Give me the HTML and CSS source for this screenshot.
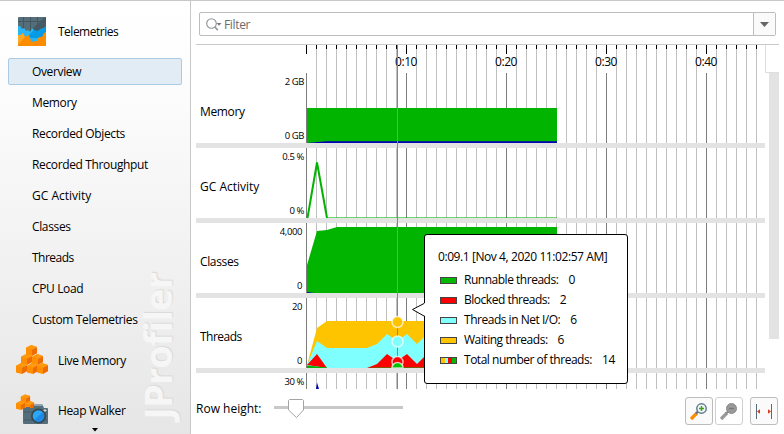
FILE: index.html
```html
<!DOCTYPE html>
<html lang="en">
<head>
<meta charset="utf-8">
<title>Telemetries</title>
<link rel="stylesheet" href="styles.css">
</head>
<body>
<svg width="0" height="0" class="defs">
  <symbol id="cube" viewBox="0 0 12 12">
    <path d="M0 3.2 5.2 0.6 11 2.4 6 5.2V11.4L0 10Z" fill="#ff8f00"/>
    <path d="M6 5 11 2.4V8.8L6 11.4Z" fill="#ef6c00"/>
    <path d="M0 3.2 5.2 0.6 11 2.4 6 5Z" fill="#ff9a0c"/>
  </symbol>
</svg>
<div class="app">
  <nav class="sidebar">
    <div class="section">
      <svg class="icon" width="32" height="32" viewBox="0 0 32 32">
        <rect x="2" y="1" width="28" height="29" rx="1" fill="#546e7a"/>
        <path d="M29 1h1v14H14Z" fill="#455a64"/>
        <path d="M2 5.500h28M7.500 1v12M14.500 1v14M21.500 1v12" stroke="#435761"/>
        <path d="M2 10l2 0 2 3 2-1 2 3 2-1 2 2 2-4 3 3 3 0 3-2 3-1 2-1v18H2Z" fill="#29b6f6"/>
        <path d="M30 10v12H10L18 14l4 1 3-2 3-1Z" fill="#039be5"/>
        <path d="M2 19l3 0 2-2 2 4 2-1 2-1 2 6 2 1 2-1 2 0 2-4 3 0 2-4 2-1v13a1 1 0 0 1-1 1H3a1 1 0 0 1-1-1Z" fill="#fb8c00"/>
        <path d="M2 19l3 0 2-2 2 4L2 28.500Z" fill="#ffa726"/>
      </svg>
      <span class="tight">Telemetries</span>
    </div>
    <div class="item selected"><span>Overview</span></div>
    <div class="item"><span>Memory</span></div>
    <div class="item"><span>Recorded Objects</span></div>
    <div class="item"><span>Recorded Throughput</span></div>
    <div class="item"><span class="wide">GC Activity</span></div>
    <div class="item"><span>Classes</span></div>
    <div class="item"><span class="tight">Threads</span></div>
    <div class="item"><span>CPU Load</span></div>
    <div class="item"><span>Custom Telemetries</span></div>
    <div class="section live">
      <svg class="icon" width="32" height="32" viewBox="0 0 32 32">
        <use href="#cube" x="10" y="0.500" width="12" height="12"/>
        <use href="#cube" x="5" y="9.500" width="12" height="12"/>
        <use href="#cube" x="16" y="9.500" width="12" height="12"/>
        <use href="#cube" x="0" y="18.500" width="12" height="12"/>
        <use href="#cube" x="11" y="18.500" width="12" height="12"/>
        <use href="#cube" x="21" y="18.500" width="12" height="12"/>
      </svg>
      <span>Live Memory</span>
    </div>
    <div class="section heap">
      <svg class="icon" width="32" height="32" viewBox="0 0 32 32">
        <use href="#cube" x="4.500" y="0" width="10.500" height="10.500"/>
        <use href="#cube" x="0" y="6.500" width="10" height="10"/>
        <use href="#cube" x="9" y="6.500" width="10" height="10"/>
        <path d="M8 14h2v-1h4v1h3l2-4h7l2 4h3a1 1 0 0 1 1 1v14a1 1 0 0 1-1 1H8a1 1 0 0 1-1-1V15a1 1 0 0 1 1-1Z" fill="#546e7a"/>
        <path d="M8 18h23M8 26h23" stroke="#455a64"/>
        <path d="M19 10h7v2h-7z" fill="#90a4ae"/>
        <circle cx="22.500" cy="22" r="7.500" fill="#37474f"/>
        <circle cx="22.500" cy="22" r="5.800" fill="#29a9f5"/>
        <path d="M18.400 26.100a5.800 5.800 0 0 0 8.200-8.200Z" fill="#1e88e5"/>
        <path d="M29 15v3M27.500 16.500h3" stroke="#cfd8dc"/>
      </svg>
      <span>Heap Walker</span>
    </div>
    <svg class="more" width="6" height="4" viewBox="0 0 6 4"><path d="M0 0h6L3 3.500Z"/></svg>
    <div class="brand">JProfiler</div>
  </nav>

  <main class="main">
    <div class="filter">
      <svg width="20" height="18" viewBox="0 0 20 18">
        <circle cx="6.500" cy="6.500" r="4.800" fill="none" stroke="#8a9499" stroke-width="1.100"/>
        <path d="M10 10l2.800 3.200" stroke="#8a9499" stroke-width="1.600"/>
        <path d="M11.500 6h5L14 8.700Z" fill="#7a7a7a"/>
      </svg>
      <span class="placeholder">Filter</span>
      <span class="dropdown"><svg width="9" height="5" viewBox="0 0 9 5"><path d="M0 0h9L4.500 5Z" fill="#666"/></svg></span>
    </div>

    <div class="charts">
      <div class="rows">
        <div class="ruler">
          <div class="plot ticks">
            <span></span><span>0:10</span><span>0:20</span><span>0:30</span><span>0:40</span>
          </div>
        </div>
        <div class="row">
          <div class="name">Memory</div>
          <div class="scale gb"><span>2 GB</span><span>0 GB</span></div>
          <svg class="plot" width="459" height="70">
            <path d="M1 35H251V70H1Z" fill="#00b400"/>
            <path d="M1 70L20 68.200H251V70Z" fill="#0000b4"/>
          </svg>
        </div>
        <div class="row">
          <div class="name wide">GC Activity</div>
          <div class="scale pct"><span>0.5 %</span><span>0 %</span></div>
          <svg class="plot" width="459" height="70">
            <path d="M21 69.500H251" stroke="#00b400" stroke-opacity=".55"/>
            <path d="M1.500 70L11 14.500L21 70" fill="none" stroke="#00b400" stroke-width="2"/>
          </svg>
        </div>
        <div class="row">
          <div class="name">Classes</div>
          <div class="scale"><span>4,000</span><span>0</span></div>
          <svg class="plot" width="459" height="70">
            <path d="M1 42L11 8L21 7L31 4H251V70H1Z" fill="#00b400"/>
            <path d="M1 69L8 70H1Z" fill="#0000b4"/>
          </svg>
        </div>
        <div class="row">
          <div class="name tight">Threads</div>
          <div class="scale"><span>20</span><span>0</span></div>
          <svg class="plot" width="459" height="70">
            <path d="M1 67L11 30L21 23H251V70H1Z" fill="#ffc400"/>
            <path d="M1 67L11 43L21 50H61L71 46L81 36L91 43L101 36L111 46L121 36H251V70H1Z" fill="#80ffff"/>
            <path d="M1 67L11 56L21 70ZM61 70L71 66L81 56L91 63L101 56L111 66L121 56H251V70Z" fill="#f00"/>
            <path d="M1 67.500L21 69.500V70H1ZM61 70L71 69.500H251V70Z" fill="#00b400"/>
          </svg>
        </div>
        <div class="row last">
          <div class="name"></div>
          <div class="scale pct"><span>30 %</span></div>
          <svg class="plot" width="459" height="16">
            <path d="M10 16L11 9.500L13 16Z" fill="#0000b4"/>
          </svg>
        </div>
        <svg class="cursor" width="14" height="344">
          <path d="M7.500 0V344" stroke="#4ab04a"/>
          <path d="M7.500 63V98M7.500 182V248" stroke="#66a866"/>
          <g stroke="#fff" stroke-opacity=".7" stroke-width="1.500">
            <circle cx="7.500" cy="277" r="5.500" fill="#ffc400"/>
            <circle cx="7.500" cy="296.500" r="5.500" fill="#80ffff"/>
            <circle cx="7.500" cy="317" r="5.500" fill="#f00"/>
            <path d="M2 323a5.500 5.500 0 0 1 11 0Z" fill="#00c400"/>
          </g>
          <path d="M0 323h14v5H0z" fill="#e3e3e3"/>
        </svg>
      </div>
      <div class="scroll"><div class="corner"></div><div class="thumb"></div></div>
    </div>

    <div class="footer">
      <span class="height-label">Row height:</span>
      <svg class="slider" width="130" height="24" viewBox="0 0 130 24">
        <path d="M0 9.500H129" stroke="#c8c8c8" stroke-width="3"/>
        <path d="M15.500 1.500H28.500L29.500 2.500V12L22.500 19.500L14.500 12V2.500Z" fill="#fff" stroke="#a4a4a4"/>
      </svg>
      <div class="tools">
        <button><svg width="26" height="26" viewBox="0 0 26 26">
          <path d="M5 21l6-6" stroke="#fb8c00" stroke-width="3.200"/><path d="M10 15.500l2.500-2.500" stroke="#546e7a" stroke-width="2"/>
          <circle cx="15.500" cy="10.500" r="4.700" fill="#f0f7fa" stroke="#607d8b" stroke-width="1.500"/>
          <path d="M13 10.500h5M15.500 8v5" stroke="#43a01b" stroke-width="1.500"/></svg></button>
        <button class="off"><svg width="26" height="26" viewBox="0 0 26 26">
          <path d="M5 21l6-6" stroke="#999" stroke-width="3.200"/><path d="M10 15.500l2.500-2.500" stroke="#888" stroke-width="2"/>
          <circle cx="15.500" cy="10.500" r="5" fill="#999" stroke="#8b8b8b"/>
          <path d="M13 10.500h5" stroke="#777" stroke-width="1.300"/></svg></button>
        <button class="fit"><svg width="26" height="26" viewBox="0 0 26 26">
          <path d="M5.500 6v15M20.500 6v15" stroke="#546e7a"/>
          <path d="M6 13.500l3-2.300v4.600ZM20 13.500l-3-2.300v4.600Z" fill="#d83a1e"/></svg></button>
      </div>
    </div>

    <div class="tooltip">
      <svg class="arrow" width="14" height="16"><path d="M14 1L1.500 7.500L14 14Z" fill="#fff"/><path d="M13 1.500L1.500 7.500L13 14" fill="none" stroke="#000"/></svg>
      <div class="time">0:09.1 [Nov 4, 2020 11:02:57 AM]</div>
      <div class="entry"><i class="green"></i><span>Runnable threads:</span><b>0</b></div>
      <div class="entry"><i class="red"></i><span>Blocked threads:</span><b>2</b></div>
      <div class="entry"><i class="cyan"></i><span>Threads in Net I/O:</span><b>6</b></div>
      <div class="entry"><i class="amber"></i><span>Waiting threads:</span><b>6</b></div>
      <div class="entry"><i class="all"></i><span>Total number of threads:</span><b>14</b></div>
    </div>
  </main>
</div>
</body>
</html>
```
FILE: styles.css
```css
* { box-sizing: border-box; }
body {
  margin: 0;
  font: 12px/16px "Open Sans", "Noto Sans", sans-serif;
  color: #000;
  background: #fff;
  overflow: hidden;
}
svg { display: block; flex: none; }
.defs { position: absolute; }
.app { display: flex; width: 784px; height: 434px; border-top: 1px solid #c8c8c8; }

.sidebar {
  position: relative;
  width: 191px;
  flex: none;
  padding-top: 15px;
  border-right: 1px solid #c8c8c8;
  background: linear-gradient(#fff 0, #fcfcfc 22%, #e6e6e6 100%);
  letter-spacing: -0.36px;
}
.section { display: flex; align-items: center; gap: 10px; height: 32px; padding-left: 16px; }
.section span { padding-top: 2px; }
.section .tight { padding-top: 0; }
.item {
  display: flex;
  align-items: center;
  height: 27px;
  margin: 0 8px 4px;
  padding-left: 24px;
  position: relative;
  z-index: 1;
}
.section + .item { margin-top: 10px; }
.item.selected { border: 1px solid #a9cbe3; border-radius: 2px; padding-left: 23px; background: #e2ecf5; }
.live { margin-top: 11px; }
.heap { margin-top: 18px; }
.more { margin: 2px 0 0 92px; }
.tight { letter-spacing: -0.5px; }
.wide { letter-spacing: 0; }
.brand {
  position: absolute;
  left: 133px;
  bottom: 14px;
  writing-mode: vertical-rl;
  transform: rotate(180deg);
  font: bold 38px/48px "Open Sans", sans-serif;
  letter-spacing: -0.9px;
  color: #f6f6f6;
  text-shadow: 1px 1px 1px #d9d9d9;
}

.main { position: relative; flex: 1; min-width: 0; display: flex; flex-direction: column; }
.filter {
  display: flex;
  align-items: center;
  width: 577px;
  height: 24px;
  margin: 11px 0 0 8px;
  padding-left: 5px;
  border: 1px solid #bdbdbd;
  border-radius: 2px;
}
.filter > svg { margin: 3px -1px 0 0; }
.placeholder { padding-top: 2px; color: #6b6b6b; letter-spacing: -0.35px; }
.dropdown {
  display: flex;
  align-items: center;
  justify-content: center;
  width: 22px;
  height: 22px;
  margin-left: auto;
  border-left: 1px solid #bdbdbd;
  background: #fafafa;
}
.charts { display: flex; width: 583px; height: 345px; margin: 8px 0 0 5px; border-top: 1px solid #c8c8c8; }
.rows { position: relative; width: 569px; }
.ruler { height: 28px; padding-left: 110px; }
.plot {
  width: 459px;
  background-image:
    linear-gradient(90deg, #7d7d7d 1px, transparent 1px),
    linear-gradient(90deg, #c0c0c0 1px, transparent 1px);
  background-size: 100px 100%, 10px 100%;
}
.ticks {
  height: 28px;
  display: flex;
  overflow: hidden;
  background-image:
    linear-gradient(90deg, #000 1px, transparent 1px),
    linear-gradient(90deg, #000 1px, transparent 1px),
    linear-gradient(90deg, #fff 1px, transparent 1px),
    linear-gradient(90deg, #c0c0c0 1px, transparent 1px);
  background-size: 100px 9px, 10px 4px, 100px 28px, 10px 28px;
  background-repeat: repeat-x;
}
.ticks span { flex: none; width: 100px; padding-top: 9px; text-align: center; letter-spacing: -0.45px; }
.ticks span:first-child { width: 50px; }
.row { display: flex; height: 75px; border-bottom: 5px solid #e3e3e3; }
.row.last { height: 16px; border: 0; overflow: hidden; }
.name { width: 70px; padding: 8px 0 0 4px; align-self: center; white-space: nowrap; letter-spacing: -0.36px; }
.name.tight { letter-spacing: -0.5px; }
.name.wide { letter-spacing: 0; }
.scale {
  width: 40px;
  padding: 3px 4px 1px 0;
  display: flex;
  flex-direction: column;
  justify-content: space-between;
  align-items: flex-end;
  font-size: 9.5px;
  line-height: 12px;
  letter-spacing: -0.4px;
  white-space: nowrap;
}
.gb, .pct { padding-right: 2px; }
.cursor { position: absolute; left: 194px; top: 0; }
.scroll { width: 14px; }
.corner { height: 28px; border-left: 1px solid #dedede; border-bottom: 1px solid #dedede; }
.thumb { width: 10px; height: 266px; margin-left: 4px; background: #e3e3e3; }

.footer { display: flex; align-items: flex-start; padding: 8px 0 0 5px; }
.height-label { width: 78px; padding-top: 4px; }
.slider { margin-top: 1px; }
.tools { display: flex; gap: 2px; margin-left: 281px; }
button { width: 28px; height: 28px; padding: 0; border: 1px solid #bcbcbc; border-radius: 3px; background: #fafafa; }
button.off { border-color: #d0d0d0; background: #fff; }
button.fit { margin-left: 5px; }

.tooltip {
  position: absolute;
  left: 233px;
  top: 233px;
  width: 204px;
  height: 150px;
  padding: 14px 0 0 13px;
  border: 1px solid #000;
  border-radius: 3px;
  background: #fff;
  white-space: nowrap;
  letter-spacing: -0.48px;
}
.arrow { position: absolute; left: -14px; top: 67px; }
.entry { display: flex; align-items: center; height: 20px; padding-left: 2px; }
.time { height: 21px; letter-spacing: -0.42px; }
.entry i { width: 17px; height: 7px; margin-right: 7px; border: 1px solid #444; }
.entry b { font-weight: normal; margin-left: 10px; letter-spacing: -0.2px; }
.green { background: #00b900; }
.red { background: #f00; }
.cyan { background: #80ffff; }
.amber { background: #ffc400; }
.all { background: linear-gradient(90deg, #ffc400 25%, #80ffff 25% 50%, #f00 50% 75%, #00b900 75%); }
```
